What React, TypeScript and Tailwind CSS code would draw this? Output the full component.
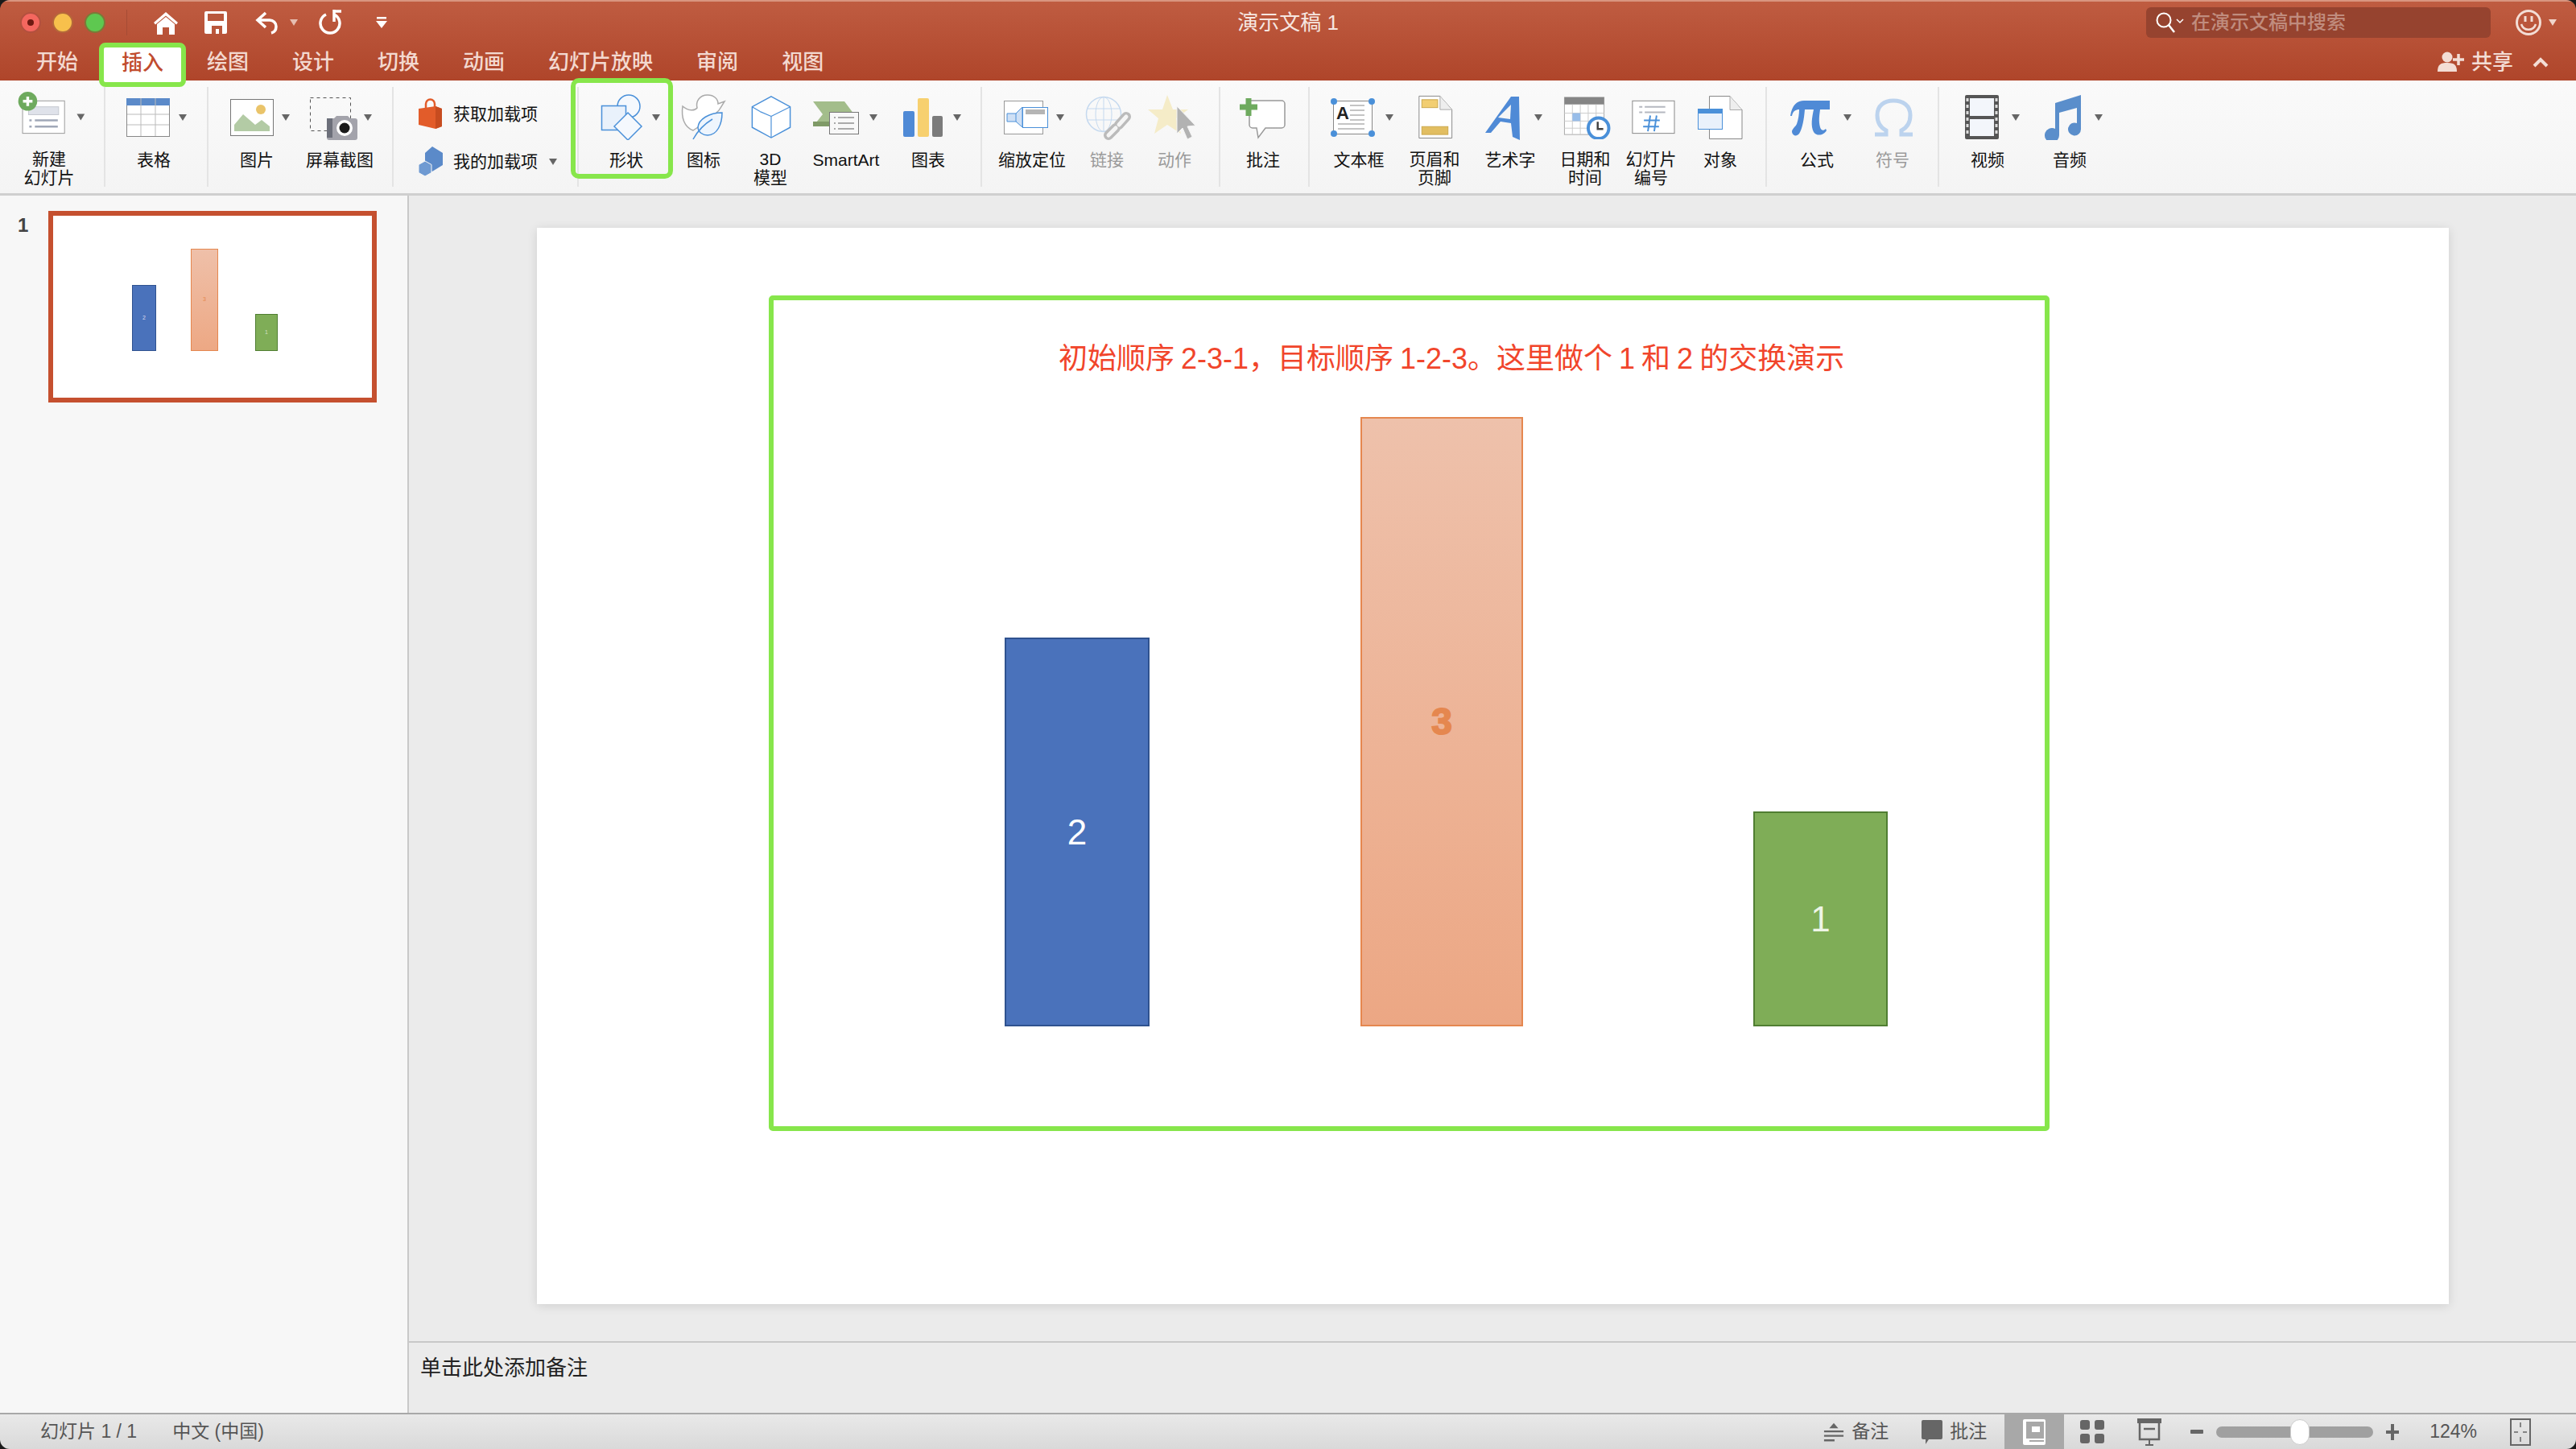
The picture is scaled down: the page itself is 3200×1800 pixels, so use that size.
import React from 'react';

// small dropdown triangle used all over the ribbon, x is the centre in item coords
const Caret = ({ x }: { x: number }) => <path d={`M${x - 5} 28h10l-5 8z`} fill="#666" />;

interface RibbonItemProps {
  width: string;
  w: number;
  label: React.ReactNode;
  dim?: boolean;
  children?: React.ReactNode;
}

const RibbonItem: React.FC<RibbonItemProps> = ({ width, w, label, dim, children }) => (
  <div className={`relative flex shrink-0 flex-col items-center pt-[6px] ${width}`}>
    <svg width={w} height={60} viewBox={`0 0 ${w} 60`} className="block">
      {children}
    </svg>
    <div className={`mt-[13px] whitespace-nowrap text-center text-[21px] leading-[23px] ${dim ? 'text-[#9a9a9a]' : 'text-[#111]'}`}>
      {label}
    </div>
  </div>
);

const Group = ({ className, children }: { className: string; children: React.ReactNode }) => (
  <div className={`flex h-[124px] shrink-0 border-r-2 border-[#e4e4e4] ${className}`}>{children}</div>
);

const tabs = ['开始', '插入', '绘图', '设计', '切换', '动画', '幻灯片放映', '审阅', '视图'];

const TitleBar = () => (
  <div className="grid h-[51px] grid-cols-[1fr_auto_1fr] items-center">
    <div className="flex items-center pl-[25px]">
      <div className="flex h-[26px] w-[26px] items-center justify-center rounded-full border-2 border-[#b3503f] bg-[#f4675f]">
        <div className="h-[8px] w-[8px] rounded-full bg-[#6e1a12]" />
      </div>
      <div className="ml-[14px] h-[26px] w-[26px] rounded-full border-2 border-[#b5683a] bg-[#f7c04c]" />
      <div className="ml-[14px] h-[26px] w-[26px] rounded-full border-2 border-[#7b7a38] bg-[#5ec850]" />
      <div className="ml-[26px] h-[32px] w-[1px] bg-[#a64c35]" />
      <svg width="32" height="30" viewBox="0 0 32 30" className="ml-[32px]">
        <path d="M1 15 16 2l15 13-2 2.500L16 6.500 3 17.500z" fill="#fff" />
        <path d="M5 17 16 8l11 9v13h-7v-9h-8v9H5z" fill="#fff" />
      </svg>
      <svg width="28" height="28" viewBox="0 0 28 28" className="ml-[32px]">
        <path d="M2 0h24a2 2 0 0 1 2 2v24a2 2 0 0 1-2 2H2a2 2 0 0 1-2-2V2a2 2 0 0 1 2-2z" fill="#fff" />
        <path d="M4 3h20v9H4zM9 18h13v10h-4v-6h-4v6H9z" fill="#b9573c" />
      </svg>
      <svg width="30" height="30" viewBox="0 0 30 30" className="ml-[35px]">
        <path d="M13 3 3 12l10 9M3 12h15a8 8 0 0 1 8 8c0 4-2 7-6 8" fill="none" stroke="#fff" strokeWidth="3.500" />
      </svg>
      <svg width="10" height="8" viewBox="0 0 10 8" className="ml-[13px]">
        <path d="M0 0h10L5 8z" fill="#e5bdb0" />
      </svg>
      <svg width="30" height="32" viewBox="0 0 30 32" className="ml-[26px]">
        <path d="M9 6a12 12 0 1 0 10 0M19 0v15M19 2h9" fill="none" stroke="#fff" strokeWidth="3.500" />
      </svg>
      <svg width="14" height="14" viewBox="0 0 14 14" className="ml-[41px]">
        <path d="M1 0h12v2.500H1zM0 5h14L7 14z" fill="#fff" />
      </svg>
    </div>
    <div className="text-[26px] leading-[30px] text-[#f6e6e0]">演示文稿 1</div>
    <div className="flex items-center justify-end pr-[24px]">
      <div className="flex h-[38px] w-[428px] items-center rounded-[6px] bg-[#96432f] pl-[12px]">
        <svg width="36" height="28" viewBox="0 0 36 28">
          <circle cx="10" cy="11" r="8.500" fill="none" stroke="#fff" strokeWidth="2" />
          <path d="m16 17 7 9" stroke="#fff" strokeWidth="2.500" />
          <path d="m26 10 4 4 4-4" fill="none" stroke="#fff" strokeWidth="1.500" />
        </svg>
        <span className="ml-[8px] text-[24px] font-medium leading-[30px] text-[#c08c7e]">在演示文稿中搜索</span>
      </div>
      <svg width="32" height="32" viewBox="0 0 32 32" className="ml-[31px]">
        <circle cx="16" cy="16" r="14.500" fill="none" stroke="#f3ddd5" strokeWidth="3" />
        <path d="M12 8v7M20 8v7" stroke="#f3ddd5" strokeWidth="3" />
        <path d="M7 18c3 9 15 9 18 0" fill="none" stroke="#f3ddd5" strokeWidth="2.500" />
      </svg>
      <svg width="10" height="8" viewBox="0 0 10 8" className="ml-[9px]">
        <path d="M0 0h10L5 8z" fill="#f0d5cb" />
      </svg>
    </div>
  </div>
);

const TabRow = () => (
  <div className="relative z-20 flex h-[47px] items-center pl-[18px]">
    {tabs.map((t) =>
      t === '插入' ? (
        <div
          key={t}
          className="-mx-[1px] flex h-[55px] items-center justify-center self-start rounded-[8px] border-[6px] border-[#87e64b] bg-white px-[22px] pb-[5px] text-[26px] font-medium text-[#c14c2e]"
        >
          {t}
        </div>
      ) : (
        <div key={t} className="px-[27px] text-[26px] font-medium leading-[30px] text-[#f3d9d0]">
          {t}
        </div>
      ),
    )}
    <div className="ml-auto flex items-center pr-[34px]">
      <svg width="34" height="26" viewBox="0 0 34 26">
        <circle cx="12" cy="7" r="6.500" fill="#f3ddd5" />
        <path d="M0 25c0-9 4-11 12-11s12 2 12 11z" fill="#f3ddd5" />
        <path d="M26 3v14M19 10h14" stroke="#f3ddd5" strokeWidth="3.500" />
      </svg>
      <span className="ml-[8px] text-[26px] font-medium leading-[30px] text-[#f3ddd5]">共享</span>
      <svg width="20" height="14" viewBox="0 0 20 14" className="ml-[24px]">
        <path d="m2 12 8-8 8 8" fill="none" stroke="#f3ddd5" strokeWidth="4" />
      </svg>
    </div>
  </div>
);

const Ribbon = () => (
  <div className="flex h-[143px] shrink-0 border-b-[3px] border-[#cfcfcf] bg-gradient-to-b from-[#fafafa] to-[#f4f4f4] pt-[8px]">
    <Group className="w-[131px]">
      <RibbonItem width="w-[122px]" w={122} label={<>新建<br />幻灯片</>}>
        <rect x="27.500" y="11.500" width="53" height="41" fill="#fff" stroke="#999" />
        <rect x="35" y="19" width="38" height="10" fill="#dfe2ea" stroke="#c5c8d0" />
        <path d="M36 36h3M43 36h29M36 44h3M43 44h29" stroke="#a0a8b8" strokeWidth="2.500" />
        <circle cx="34" cy="12" r="12" fill="#6eaa5e" />
        <path d="M34 6v12M28 12h12" stroke="#fff" strokeWidth="3.500" />
        <Caret x={101} />
      </RibbonItem>
    </Group>
    <Group className="w-[128px]">
      <RibbonItem width="w-[120px]" w={120} label="表格">
        <rect x="26.500" y="8.500" width="53" height="47" fill="#fff" stroke="#888" />
        <rect x="26" y="8" width="54" height="9" fill="#5b8ac9" />
        <path d="M44 8v47M62 8v47M27 28h52M27 41h52" stroke="#bbb" />
        <Caret x={96} />
      </RibbonItem>
    </Group>
    <Group className="w-[230px]">
      <RibbonItem width="w-[120px]" w={120} label="图片">
        <rect x="27.500" y="9.500" width="53" height="45" fill="#fff" stroke="#777" />
        <path d="M32 49V41l11-13 15 13 8-6 10 8v6z" fill="#b3cba5" />
        <ellipse cx="65" cy="22" rx="6" ry="6" fill="#eac46a" />
        <Caret x={96} />
      </RibbonItem>
      <RibbonItem width="w-[86px]" w={86} label="屏幕截图">
        <rect x="6.500" y="7.500" width="50" height="41" fill="none" stroke="#555" strokeDasharray="4 4" />
        <path d="M27 36a3 3 0 0 1 3-3h6l3-3h14l3 3h6a3 3 0 0 1 3 3v21a3 3 0 0 1-3 3H30a3 3 0 0 1-3-3z" fill="#a3a3ab" />
        <rect x="27" y="33" width="7" height="24" fill="#6c6f7a" />
        <circle cx="49" cy="45" r="10" fill="#fff" />
        <circle cx="49" cy="45" r="6.500" fill="#1a1a1a" />
        <Caret x={78} />
      </RibbonItem>
    </Group>
    <Group className="w-[230px]">
      <div className="flex flex-col pl-[31px] pt-[14px] text-[21px] leading-[30px] text-[#111]">
        <div className="flex h-[40px] items-center">
          <svg width="30" height="40" viewBox="0 0 30 40">
            <path d="M9 13V7a5.500 5.500 0 0 1 11 0v6" fill="none" stroke="#e25c2a" strokeWidth="2.500" />
            <path d="M0 13 21 10l8 3v22l-8 3-21-5z" fill="#e25c2a" />
            <path d="M21 10l8 3v22l-8 3z" fill="#c74c20" />
          </svg>
          <span className="ml-[13px]">获取加载项</span>
        </div>
        <div className="mt-[20px] flex h-[38px] items-center">
          <svg width="30" height="38" viewBox="0 0 30 38">
            <path d="M17 0l13 8v15l-13 8-9-5V8z" fill="#5b8ac9" />
            <path d="M8 18l8 4.500v10L8 37l-8-4.500v-10z" fill="#6f9ad2" stroke="#f6f6f6" />
          </svg>
          <span className="ml-[13px]">我的加载项</span>
          <svg width="10" height="8" viewBox="0 0 10 8" className="ml-[14px]">
            <path d="M0 0h10L5 8z" fill="#666" />
          </svg>
        </div>
      </div>
    </Group>
    <Group className="w-[501px]">
      <RibbonItem width="w-[118px]" w={118} label="形状">
        <circle cx="62" cy="18" r="14" fill="#f4f8fd" stroke="#4a90d9" strokeWidth="1.500" />
        <rect x="28.500" y="17.500" width="30" height="30" fill="#e9f1fb" stroke="#4a90d9" strokeWidth="1.500" />
        <path d="m61 26 17 17-17 17-17-17z" fill="#f4f8fd" stroke="#4a90d9" strokeWidth="1.500" />
        <Caret x={96} />
      </RibbonItem>
      <RibbonItem width="w-[74px]" w={74} label="图标">
        <path d="M11 18C18 24 26 24 29 20 27 12 32 4 42 4 50 4 55 9 55 15L63 12 58 20C56 24 54 25 52 27L30 44 24 48C13 44 9 32 11 18z" fill="#fff" stroke="#aaa" strokeWidth="1.500" />
        <path d="M60 26C44 26 31 34 30 44 30 50 36 54 42 54 54 54 60 40 60 26z" fill="#eef5fd" stroke="#4a90d9" strokeWidth="1.500" />
        <path d="M24 59C30 48 38 40 48 34" fill="none" stroke="#4a90d9" strokeWidth="1.500" />
      </RibbonItem>
      <RibbonItem width="w-[92px]" w={92} label={<>3D<br />模型</>}>
        <path d="M47 6l24 13v26L47 58 23 45V19z" fill="#fff" stroke="#4a90d9" strokeWidth="1.500" />
        <path d="M23 19l10 6M47 31v27M47 31l24-12M47 31l-14-6" fill="none" stroke="#4a90d9" strokeWidth="1.200" />
      </RibbonItem>
      <RibbonItem width="w-[96px]" w={96} label="SmartArt">
        <path d="M7 12h39l12 16-12 15H7l12-15z" fill="#a3bd8b" />
        <path d="M7 37h40v6H7z" fill="#7f9a67" />
        <rect x="27.500" y="25.500" width="36" height="27" fill="#f8f8f8" stroke="#777" />
        <path d="M33 32h2M38 32h20M33 39h2M38 39h20M33 46h2M38 46h20" stroke="#aaa" strokeWidth="2" />
        <Caret x={82} />
      </RibbonItem>
      <RibbonItem width="w-[108px]" w={108} label="图表">
        <rect x="23" y="24" width="14" height="32" rx="2" fill="#4f8ad6" />
        <rect x="41" y="8" width="14" height="48" rx="2" fill="#f7d06f" />
        <rect x="59" y="30" width="13" height="26" rx="2" fill="#7b7b7b" />
        <Caret x={90} />
      </RibbonItem>
      {/* the green highlight drawn on top of the 形状 button */}
      <div className="pointer-events-none absolute left-[709px] top-[97px] z-10 h-[125px] w-[127px] rounded-[10px] border-[6px] border-[#87e64b]" />
    </Group>
    <Group className="w-[296px]">
      <RibbonItem width="w-[124px]" w={124} label="缩放定位">
        <rect x="27.500" y="11.500" width="48" height="41" fill="#fff" stroke="#999" />
        <path d="M42 27l8-8v25l-8-7zM42 27H31v10h11" fill="#cfe0f5" stroke="#4a90d9" />
        <rect x="50.500" y="19.500" width="31" height="25" fill="#fff" stroke="#4a90d9" />
        <rect x="54" y="22" width="24" height="6" fill="#b5b5b5" />
        <Caret x={97} />
      </RibbonItem>
      <RibbonItem width="w-[62px]" w={62} dim label="链接">
        <circle cx="27" cy="28" r="21.500" fill="none" stroke="#c5d9ef" strokeWidth="1.500" />
        <ellipse cx="27" cy="28" rx="10" ry="21.500" fill="none" stroke="#c5d9ef" />
        <path d="M6 21h42M6 35h42M27 6v44" stroke="#c5d9ef" />
        <path d="M55 31 46 41M42 45 33 54" stroke="#bbb" strokeWidth="12" strokeLinecap="round" />
        <path d="M55 31 46 41M42 45 33 54" stroke="#f5f5f5" strokeWidth="5" strokeLinecap="round" />
      </RibbonItem>
      <RibbonItem width="w-[106px]" w={106} dim label="动作">
        <path d="M44 4l7 18h19L55 33l6 19-17-11-16 11 5-19-13-11h18z" fill="#f5ecc8" />
        <path d="M56 18v34l7-7 6 14 6-3-6-13 10-1z" fill="#b2b2b2" stroke="#f4f4f4" />
      </RibbonItem>
    </Group>
    <Group className="w-[111px]">
      <RibbonItem width="w-[106px]" w={106} label="批注">
        <path d="M36 11h40a4 4 0 0 1 4 4v26a4 4 0 0 1-4 4H56l-9 12-2-12h-5a4 4 0 0 1-4-4z" fill="#fff" stroke="#999" strokeWidth="1.500" />
        <path d="M35 8v22M24 19h22" stroke="#6eaa5e" strokeWidth="7" />
      </RibbonItem>
    </Group>
    <Group className="w-[568px]">
      <RibbonItem width="w-[122px]" w={122} label="文本框">
        <rect x="29.500" y="11.500" width="48" height="41" fill="#fff" stroke="#888" />
        <text x="33" y="34" fontSize="22" fontWeight="700" fill="#222">A</text>
        <path d="M50 17h18M50 23h18M50 29h18M50 35h18M35 40h33M35 46h33" stroke="#c4c4c4" strokeWidth="2" />
        <circle cx="30" cy="12" r="4" fill="#4a90d9" />
        <circle cx="77" cy="12" r="4" fill="#4a90d9" />
        <circle cx="30" cy="52" r="4" fill="#4a90d9" />
        <circle cx="77" cy="52" r="4" fill="#4a90d9" />
        <Caret x={99} />
      </RibbonItem>
      <RibbonItem width="w-[66px]" w={66} label={<>页眉和<br />页脚</>}>
        <path d="M13.500 5.500H40l15 17v36H13.500z" fill="#fff" stroke="#888" />
        <path d="M40 5.500v17h15" fill="#eee" stroke="#aaa" />
        <rect x="17" y="10" width="20" height="10" fill="#f2ce72" stroke="#cba74a" />
        <rect x="17" y="44" width="33" height="10" fill="#e2be61" stroke="#cba74a" />
      </RibbonItem>
      <RibbonItem width="w-[122px]" w={122} label="艺术字">
        <path d="M62 6h10l1 54-9-4-2-17-13-2-12 14-7 0z" fill="#4f8ad6" />
        <path d="M62 16 46 32l15 2z" fill="#f6f6f6" />
        <Caret x={96} />
      </RibbonItem>
      <RibbonItem width="w-[64px]" w={64} label={<>日期和<br />时间</>}>
        <rect x="6" y="7" width="50" height="47" fill="#fff" stroke="#aaa" />
        <rect x="6" y="7" width="50" height="9" fill="#858585" />
        <path d="M16 16v38M26 16v38M36 16v38M46 16v38M6 27h50M6 37h50M6 46h50" stroke="#ccc" />
        <rect x="16" y="27" width="10" height="10" fill="#98bde9" />
        <circle cx="49" cy="46" r="13" fill="#fff" stroke="#4a90d9" strokeWidth="4" />
        <path d="M48 38v9h7" fill="none" stroke="#444" strokeWidth="2.500" />
      </RibbonItem>
      <RibbonItem width="w-[100px]" w={100} label={<>幻灯片<br />编号</>}>
        <rect x="26.500" y="11.500" width="53" height="41" fill="#fff" stroke="#888" />
        <path d="M35 19h4M42 19h26M35 26h4M42 26h26" stroke="#b5b8c0" strokeWidth="2" />
        <path d="M49 30l-3 20M57 30l-3 20M41 36h20M40 44h20" stroke="#4a90d9" strokeWidth="2" />
      </RibbonItem>
      <RibbonItem width="w-[72px]" w={72} label="对象">
        <path d="M22.500 5.500H48l15 17v36H22.500z" fill="#fff" stroke="#888" />
        <path d="M48 5.500v17h15" fill="#eee" stroke="#aaa" />
        <rect x="8.500" y="21.500" width="30" height="25" fill="#e9f1fb" stroke="#4a90d9" />
        <rect x="8" y="21" width="31" height="6" fill="#4a90d9" />
      </RibbonItem>
    </Group>
    <Group className="w-[214px]">
      <RibbonItem width="w-[124px]" w={124} label="公式">
        <path
          d="M29 30C31 16 38 11 46 11H78V22H66C65 30 64 36 66 44 67 48 70 49 73 46L74 48C71 54 62 56 58 50 54 42 56 32 58 22H47C46 34 44 46 40 52 37 56 32 55 31 50 31 46 35 44 37 40 39 34 40 28 40 22 36 22 32 24 31 30z"
          fill="#4f8ad6"
        />
        <Caret x={100} />
      </RibbonItem>
      <RibbonItem width="w-[64px]" w={64} label="符号" dim>
        <path d="M10 53h14v-5C16 44 13 37 13 29 13 17 22 11 33 11 45 11 54 17 54 29 54 37 51 44 43 48v5h14" fill="none" stroke="#bcd3ee" strokeWidth="5" />
      </RibbonItem>
    </Group>
    <div className="flex h-[124px] shrink-0">
      <RibbonItem width="w-[120px]" w={120} label="视频">
        <rect x="32" y="4" width="42" height="55" rx="2" fill="#555" />
        <rect x="38" y="8" width="30" height="22" fill="#f3f6fb" />
        <rect x="38" y="34" width="30" height="21" fill="#f3f6fb" />
        <path d="M35 8v48M71 8v48" stroke="#ddd" strokeWidth="3" strokeDasharray="4 4" />
        <Caret x={95} />
      </RibbonItem>
      <RibbonItem width="w-[84px]" w={84} label="音频">
        <path d="M24 14 56 4v42a8 8 0 1 1-5-7V20l-22 6v28a9 9 0 1 1-5-8z" fill="#5a8ecb" />
        <Caret x={78} />
      </RibbonItem>
    </div>
  </div>
);

const Thumbnail = () => (
  <div className="flex h-[238px] w-[408px] items-end gap-[43px] border-[6px] border-[#c5502f] bg-white pb-[58px] pl-[98px]">
    <div className="flex h-[82px] w-[30px] items-center justify-center border border-[#2f528f] bg-[#4a72bb] text-[7px] text-[#dde]">2</div>
    <div className="flex h-[127px] w-[34px] items-center justify-center border border-[#e5874f] bg-gradient-to-b from-[#efc0a9] to-[#eda884] text-[7px] text-[#e5874f]">3</div>
    <div className="ml-[3px] flex h-[46px] w-[28px] items-center justify-center border border-[#507e32] bg-[#7fad57] text-[7px] text-[#cfe0c0]">1</div>
  </div>
);

const Slide = () => (
  <div className="h-[1337px] w-[2375px] bg-white pl-[288px] pt-[84px] shadow-[0_2px_12px_rgba(0,0,0,0.12)]">
    <div className="flex h-[1038px] w-[1591px] flex-col rounded-[5px] border-[6px] border-[#87e64b]">
      <div className="mt-[51px] whitespace-nowrap pl-[354px] text-[36px] leading-[44px] text-[#f1452b] [word-spacing:-2px]">
        初始顺序 2-3-1，目标顺序 1-2-3。这里做个 1 和 2 的交换演示
      </div>
      <div className="mt-[50px] flex items-end pl-[287px]">
        <div className="flex h-[483px] w-[180px] items-center justify-center border-2 border-[#2f528f] bg-[#4a72bb] text-[44px] text-white">2</div>
        <div className="ml-[262px] flex h-[757px] w-[202px] items-center justify-center border-2 border-[#e5874f] bg-gradient-to-b from-[#eec1ab] to-[#eca784] text-[46px] font-bold text-[#e5874f] [-webkit-text-stroke:2px_#e5874f]">3</div>
        <div className="ml-[286px] flex h-[267px] w-[167px] items-center justify-center border-2 border-[#507e32] bg-[#7fad57] text-[44px] text-[#eef5e6]">1</div>
      </div>
    </div>
  </div>
);

const StatusBar = () => (
  <div className="flex h-[45px] shrink-0 items-center border-t-2 border-[#a8a8a8] bg-gradient-to-b from-[#e9e9e9] to-[#d9d9d9] pl-[50px] text-[23px] text-[#555]">
    <span>幻灯片 1 / 1</span>
    <span className="ml-[44px]">中文 (中国)</span>
    <div className="ml-auto flex h-full items-center">
      <svg width="26" height="28" viewBox="0 0 28 28">
        <path d="M14 2l6 7H8z" fill="#666" />
        <path d="M1 13h26M1 19h26M1 25h14" stroke="#666" strokeWidth="2.500" />
      </svg>
      <span className="ml-[9px]">备注</span>
      <svg width="26" height="30" viewBox="0 0 26 30" className="ml-[41px]">
        <path d="M2 0h22a2 2 0 0 1 2 2v20a2 2 0 0 1-2 2H9l-4 6v-6H2a2 2 0 0 1-2-2V2a2 2 0 0 1 2-2z" fill="#666" />
      </svg>
      <span className="ml-[9px]">批注</span>
      <div className="ml-[22px] flex h-full w-[74px] items-center justify-center bg-[#a8a8a8]">
        <svg width="28" height="32" viewBox="0 0 28 32">
          <rect width="28" height="32" rx="2" fill="#fff" />
          <rect x="4" y="3" width="22" height="21" fill="#a8a8a8" />
          <rect x="11" y="9" width="10" height="7" fill="#fff" />
          <rect x="8" y="26" width="18" height="2" fill="#a8a8a8" />
        </svg>
      </div>
      <svg width="30" height="30" viewBox="0 0 30 30" className="ml-[20px]">
        <rect width="12" height="12" rx="3" fill="#666" />
        <rect x="18" width="12" height="12" rx="3" fill="#666" />
        <rect y="17" width="12" height="12" rx="3" fill="#666" />
        <rect x="18" y="17" width="12" height="12" rx="3" fill="#666" />
      </svg>
      <svg width="30" height="34" viewBox="0 0 30 34" className="ml-[41px]">
        <rect x="0" y="0" width="30" height="6" fill="#666" />
        <path d="M3 5v21h24V5" fill="none" stroke="#666" strokeWidth="2.500" />
        <path d="M8 13h14" stroke="#666" strokeWidth="2.500" />
        <path d="M15 26v6M10 33h10" stroke="#666" strokeWidth="2" />
      </svg>
      <div className="ml-[36px] h-[5px] w-[16px] rounded-[1px] bg-[#666]" />
      <div className="relative ml-[16px] h-[14px] w-[195px] rounded-full bg-[#a0a0a0]">
        <div className="absolute left-[92px] top-[-9px] h-[32px] w-[24px] rounded-full border border-[#ccc] bg-white" />
      </div>
      <svg width="16" height="24" viewBox="0 0 16 24" className="ml-[16px]">
        <path d="M8 2v20M0 12h16" stroke="#666" strokeWidth="4" />
      </svg>
      <span className="ml-[38px]">124%</span>
      <svg width="26" height="34" viewBox="0 0 26 34" className="ml-[41px] mr-[56px]">
        <rect x="1" y="1" width="24" height="32" fill="none" stroke="#666" strokeWidth="2" />
        <path d="M13 5v6M13 23v6M5 17h5M16 17h5" stroke="#666" strokeWidth="1.500" />
      </svg>
    </div>
  </div>
);

export default function App() {
  return (
    <div className="h-[1800px] w-[3200px] bg-[#1a1a1a] [font-family:'Liberation_Sans','Noto_Sans_CJK_SC',sans-serif]">
      <div className="relative flex h-full w-full flex-col overflow-hidden rounded-[12px]">
        <div className="h-[100px] shrink-0 border-t-2 border-[#d99580] bg-gradient-to-b from-[#bf5c41] to-[#af452a]">
          <TitleBar />
          <TabRow />
        </div>
        <Ribbon />
        <div className="flex min-h-0 flex-1">
          <aside className="flex w-[508px] shrink-0 border-r-2 border-[#c9c9c9] bg-[#f7f7f7] pt-[19px]">
            <div className="w-[60px] pl-[22px] pt-[3px] text-[24px] font-bold leading-[30px] text-[#444]">1</div>
            <Thumbnail />
          </aside>
          <main className="flex min-w-0 flex-1 flex-col bg-[#ebebeb]">
            <div className="flex-1 pl-[159px] pt-[40px]">
              <Slide />
            </div>
            <div className="h-[89px] shrink-0 border-t-2 border-[#c8c8c8] pl-[14px] pt-[15px] text-[26px] leading-[32px] text-[#222]">
              单击此处添加备注
            </div>
          </main>
        </div>
        <StatusBar />
      </div>
    </div>
  );
}
